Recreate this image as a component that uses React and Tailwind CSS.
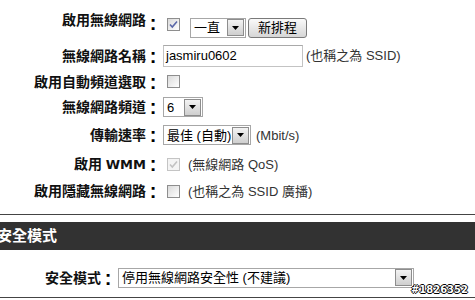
import React from 'react'

// 下拉選單（舊式 Windows 樣式）
const Select = ({ text, className }) => (
  <div className={`flex items-center h-[20px] border border-[#a7a7a7] bg-white ${className}`}>
    <span className="flex-1 pl-[3px] text-[13px] leading-none text-black whitespace-nowrap">{text}</span>
    <div className="w-[17px] h-[17px] mr-[1px] flex items-center justify-center border border-[#8d8d8d] bg-gradient-to-b from-[#f3f3f3] to-[#cfcfcf]">
      <svg width="7" height="4" viewBox="0 0 7 4">
        <path d="M0 0h7L3.5 4z" fill="#000" />
      </svg>
    </div>
  </div>
)

const Checkbox = ({ checked, disabled, className = '' }) => (
  <div
    className={`w-[13px] h-[13px] flex items-center justify-center border ${
      disabled ? 'border-[#c4c4c4] bg-[#f4f4f4]' : 'border-[#8e8e8e] bg-gradient-to-br from-[#dadada] to-white'
    } ${className}`}
  >
    {checked && (
      <svg width="9" height="9" viewBox="0 0 9 9">
        <path
          d="M1 4.5l2.3 2.5L8 1.5"
          fill="none"
          stroke={disabled ? '#c2c2c2' : '#5a67a8'}
          strokeWidth="1.6"
        />
      </svg>
    )}
  </div>
)

const Colon = ({ className = '' }) => (
  <div className={`w-[14px] text-center text-[20px] font-bold leading-none text-black ${className}`}>:</div>
)

const Label = ({ children, className = '' }) => (
  <div className={`w-[146px] text-right text-[14px] leading-[16px] font-bold text-[#111] whitespace-nowrap ${className}`}>
    {children}
  </div>
)

const Note = ({ children, className = '' }) => (
  <span className={`text-[13px] leading-none text-[#333] whitespace-nowrap ${className}`}>{children}</span>
)

export default function App() {
  return (
    <div className="relative w-[475px] h-[300px] overflow-hidden bg-white font-['Liberation_Sans','Noto_Sans_CJK_TC',sans-serif]">
      {/* 無線網路設定 */}
      <div className="pt-[13px]">
        <div className="flex items-center h-[29px]">
          <Label className="mb-[15px]">啟用無線網路</Label>
          <Colon className="mb-[9px]" />
          <div className="flex items-center pl-[3px]">
            <Checkbox checked className="ml-[4px] mb-[7px]" />
            <Select text="一直" className="w-[56px] ml-[10px]" />
            <button className="ml-[2px] w-[59px] h-[20px] rounded-[3px] border border-[#7a7a7a] bg-gradient-to-b from-[#fafafa] to-[#d6d6d6] text-[13px] leading-none text-black">
              新排程
            </button>
          </div>
        </div>

        <div className="flex items-center h-[27px]">
          <Label>無線網路名稱</Label>
          <Colon />
          <div className="flex items-center pl-[3px]">
            <div className="w-[140px] h-[22px] flex items-center pl-[2px] border border-[#c3c3c3] border-t-[#a9a9a9] bg-white text-[13px] text-black">
              jasmiru0602
            </div>
            <Note className="ml-[3px]">(也稱之為 SSID)</Note>
          </div>
        </div>

        <div className="flex items-center h-[25px]">
          <Label>啟用自動頻道選取</Label>
          <Colon />
          <div className="flex items-center pl-[3px]">
            <Checkbox className="ml-[4px]" />
          </div>
        </div>

        <div className="flex items-center h-[26px]">
          <Label>無線網路頻道</Label>
          <Colon />
          <div className="flex items-center pl-[3px]">
            <Select text="6" className="w-[40px]" />
          </div>
        </div>

        <div className="flex items-center h-[30px]">
          <Label>傳輸速率</Label>
          <Colon />
          <div className="flex items-center pl-[3px]">
            <Select text="最佳 (自動)" className="w-[88px]" />
            <Note className="ml-[5px]">(Mbit/s)</Note>
          </div>
        </div>

        <div className="flex items-center h-[28px]">
          <Label>
            啟用 <span className="font-bold font-['DejaVu_Sans',sans-serif] text-[13px]">WMM</span>
          </Label>
          <Colon />
          <div className="flex items-center pl-[3px]">
            <Checkbox checked disabled className="ml-[4px]" />
            <Note className="ml-[8px]">(無線網路 QoS)</Note>
          </div>
        </div>

        <div className="flex items-center h-[26px]">
          <Label>啟用隱藏無線網路</Label>
          <Colon />
          <div className="flex items-center pl-[3px]">
            <Checkbox className="ml-[4px]" />
            <Note className="ml-[8px]">(也稱之為 SSID 廣播)</Note>
          </div>
        </div>
      </div>

      <div className="mt-[10px] h-px bg-[#444]" />

      {/* 安全模式 */}
      <div className="mt-[7px] h-[28px] flex items-center bg-[#323232]">
        <span className="-ml-[3px] text-[15px] font-bold text-white">安全模式</span>
      </div>

      <div className="h-[47px] pt-[8px] flex items-center">
        <div className="w-[101px] text-right text-[14px] leading-[16px] font-bold text-[#111]">安全模式</div>
        <Colon />
        <div className="pl-[3px]">
          <Select text="停用無線網路安全性 (不建議)" className="w-[296px] h-[19px]" />
        </div>
      </div>

      <div className="h-px bg-[#444]" />

      <span className="absolute right-[7px] top-[285px] text-[10px] leading-none font-bold text-white font-['DejaVu_Sans',sans-serif] [text-shadow:1px_0_#000,-1px_0_#000,0_1px_#000,0_-1px_#000]">
        #1826352
      </span>
    </div>
  )
}
